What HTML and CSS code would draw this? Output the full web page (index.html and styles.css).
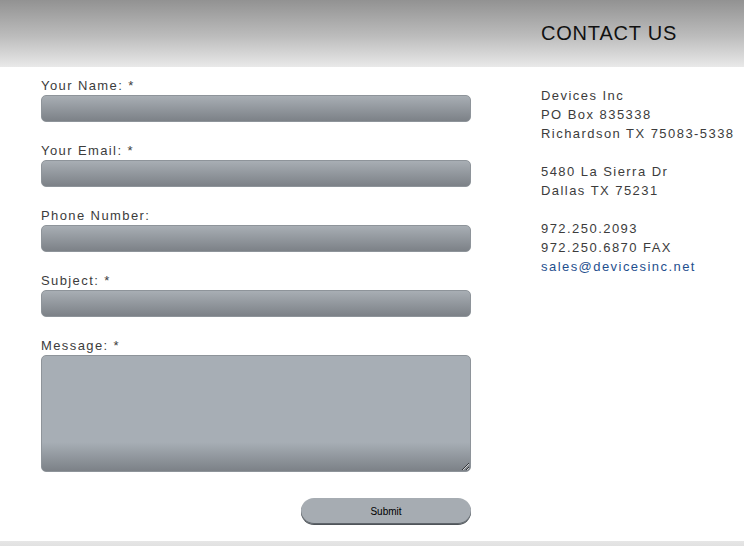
FILE: index.html
```html
<!DOCTYPE html>
<html>
<head>
<meta charset="utf-8">
<link rel="stylesheet" href="styles.css">
</head>
<body>
<header class="topbar">
  <div class="topbar-spacer"></div>
  <h1 class="title">CONTACT US</h1>
</header>
<main class="page">
  <form class="form">
    <label class="field-label">Your Name: *</label>
    <input class="field" type="text">
    <label class="field-label">Your Email: *</label>
    <input class="field" type="text">
    <label class="field-label">Phone Number:</label>
    <input class="field" type="text">
    <label class="field-label">Subject: *</label>
    <input class="field" type="text">
    <label class="field-label">Message: *</label>
    <textarea class="field message"></textarea>
    <div class="actions">
      <button class="submit" type="button">Submit</button>
    </div>
  </form>
  <aside class="contact">
    <p>Devices Inc<br>PO Box 835338<br>Richardson TX 75083-5338</p>
    <p>5480 La Sierra Dr<br>Dallas TX 75231</p>
    <p>972.250.2093<br>972.250.6870 FAX<br><a class="mail" href="#">sales@devicesinc.net</a></p>
  </aside>
</main>
<footer class="bottombar"></footer>
</body>
</html>
```
FILE: styles.css
```css
* { box-sizing: border-box; }
html, body { margin: 0; padding: 0; background: #fff; }
body {
  font-family: "Liberation Sans", Arial, Helvetica, sans-serif;
  color: #3c3c3c;
  width: 744px;
  overflow: hidden;
}
.topbar {
  height: 67px;
  background: linear-gradient(to bottom, #929292 0%, #bdbdbd 55%, #e9e9e9 100%);
  display: flex;
}
.topbar-spacer { width: 541px; flex: none; }
.title {
  margin: 0;
  padding-top: 22px;
  font-size: 20px;
  font-weight: normal;
  line-height: 23px;
  letter-spacing: 0.8px;
  color: #111;
}
.page {
  display: flex;
  padding-left: 41px;
  gap: 70px;
}
.form {
  width: 430px;
  flex: none;
  display: flex;
  flex-direction: column;
  padding-top: 11px;
}
.field-label {
  display: block;
  font-size: 13px;
  line-height: 15px;
  letter-spacing: 1.4px;
  color: #3c3c3c;
  margin-bottom: 2px;
}
.field {
  display: block;
  width: 430px;
  height: 27px;
  margin: 0 0 21px 0;
  border: 1px solid #8e949a;
  border-radius: 5px;
  background: linear-gradient(to bottom, #a8aeb4 0%, #7c8187 100%);
  font: inherit;
  outline: none;
}
.message {
  height: 117px;
  resize: both;
  margin-bottom: 26px;
  background: linear-gradient(to bottom, #a7aeb5 0%, #a7aeb5 75%, #7c8187 100%);
}
.actions {
  display: flex;
  justify-content: flex-end;
}
.submit {
  width: 170px;
  height: 26px;
  border: 0;
  border-radius: 13px;
  background: #a6acb2;
  box-shadow: inset 0 -1px 0 #5e646a, 0 1px 0 #4f5459;
  font-family: "Liberation Sans", Arial, sans-serif;
  font-size: 10px;
  color: #000;
  padding: 0;
}
.contact {
  padding-top: 19px;
  font-size: 13px;
  line-height: 19px;
  letter-spacing: 1.45px;
  color: #3c3c3c;
  white-space: nowrap;
}
.contact p { margin: 0 0 19px 0; }
.mail { color: #1f4f8e; text-decoration: none; }
.bottombar {
  margin-top: 17px;
  height: 10px;
  background: linear-gradient(to bottom, #e6e6e6, #dcdcdc);
}
```
